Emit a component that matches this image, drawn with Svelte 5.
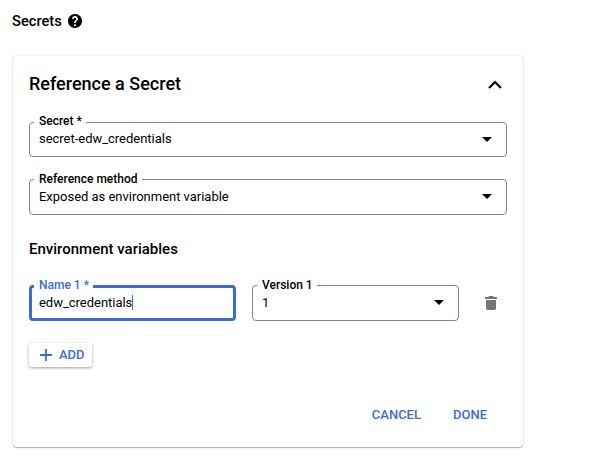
<script>
  let secret = $state('secret-edw_credentials');
  let method = $state('Exposed as environment variable');
  let name = $state('edw_credentials');
  let version = $state('1');
</script>

{#snippet arrow()}
  <svg class="arrow" width="10" height="5" viewBox="0 0 10 5"><path d="M0 0h10L5 5z" fill="#000" /></svg>
{/snippet}

<main>
  <header>
    <span class="title">Secrets</span>
    <svg width="14" height="14" viewBox="2 2 20 20"><path d="M12 2C6.48 2 2 6.48 2 12s4.48 10 10 10 10-4.48 10-10S17.52 2 12 2zm1.2 17h-2.4v-2.4h2.4V19zm1.9-7.6-.9.92C13.5 13.05 13.2 13.6 13.2 15h-2.4v-.5c0-1.1.45-2.1 1.17-2.83l1.24-1.26c.37-.36.59-.86.59-1.41 0-1.1-.8-1.8-1.8-1.8s-1.8.8-1.8 1.8H7.8c0-2.3 1.9-4.1 4.2-4.1s4.2 1.8 4.2 4.1c0 .9-.4 1.7-1.1 2.4z" fill="#000" /></svg>
  </header>

  <section class="card">
    <div class="head">
      <h2>Reference a Secret</h2>
      <svg width="14" height="9" viewBox="0 0 14 9"><path d="M1 8l6-6 6 6" fill="none" stroke="#000" stroke-width="2.1" /></svg>
    </div>

    <div class="field first">
      <span class="label">Secret *</span>
      <span class="value">{secret}</span>
      {@render arrow()}
    </div>
    <div class="field second">
      <span class="label">Reference method</span>
      <span class="value">{method}</span>
      {@render arrow()}
    </div>

    <h3>Environment variables</h3>

    <div class="row">
      <div class="field focused">
        <span class="label">Name 1 *</span>
        <span class="value">{name}</span><i class="caret"></i>
      </div>
      <div class="field">
        <span class="label">Version 1</span>
        <span class="value">{version}</span>
        {@render arrow()}
      </div>
      <svg class="trash" width="12" height="14" viewBox="0 0 12 14"><path d="M0 1h3.3l.7-1h4l.7 1H12v2H0zM1 4h10v8.2q0 1.8-1.8 1.8H2.8Q1 14 1 12.2z" fill="#757575" /></svg>
    </div>

    <button class="add">
      <svg width="12" height="12" viewBox="0 0 12 12"><path d="M6 0v12M0 6h12" stroke="#3b6cd4" stroke-width="1.8" /></svg>
      <span>ADD</span>
    </button>

    <div class="actions">
      <button>CANCEL</button>
      <button>DONE</button>
    </div>
  </section>
</main>

<style>
  :global(body) {
    background: #fff;
  }
  main {
    box-sizing: border-box;
    width: 606px;
    height: 456px;
    padding: 11px 0 0 12px;
    overflow: hidden;
    font-family: Roboto, "Liberation Sans", sans-serif;
    color: #000;
  }
  header {
    display: flex;
    align-items: center;
    gap: 5px;
    height: 20px;
  }
  .title {
    width: 51px;
    font-size: 14.7px;
    font-weight: 500;
  }
  .card {
    box-sizing: border-box;
    width: 510px;
    height: 391px;
    margin: 25px 0 0 1px;
    padding: 0 16px;
    border-radius: 4px;
    box-shadow: 0 1px 1px rgba(0, 0, 0, 0.28), 0 0 2px rgba(0, 0, 0, 0.22);
    display: flex;
    flex-direction: column;
  }
  .head {
    display: flex;
    align-items: center;
    justify-content: space-between;
    height: 56px;
    padding-right: 5px;
  }
  h2,
  h3 {
    margin: 0;
    font-weight: 500;
  }
  h2 {
    padding-bottom: 2px;
    font-size: 18px;
  }
  h3 {
    margin-top: 24px;
    font-size: 15px;
    line-height: 20px;
  }
  .field {
    position: relative;
    box-sizing: border-box;
    display: flex;
    align-items: center;
    height: 36px;
    padding: 0 14px 1px 9px;
    border: 1px solid #80868b;
    border-radius: 4px;
  }
  .first {
    height: 35px;
    margin-top: 10px;
  }
  .second {
    margin-top: 22px;
  }
  .label {
    position: absolute;
    top: -8px;
    left: 4px;
    padding: 0 4px 0 5px;
    background: #fff;
    font-size: 12px;
    line-height: 14px;
    font-weight: 500;
    white-space: nowrap;
  }
  .first .label {
    top: -9px;
  }
  .value {
    font-size: 13px;
    line-height: 18px;
    letter-spacing: -0.02px;
    white-space: nowrap;
  }
  .arrow {
    margin-left: auto;
  }
  .row {
    display: flex;
    align-items: center;
    margin-top: 26px;
  }
  .row .field {
    width: 207px;
    margin-right: 16px;
  }
  .row .focused {
    padding-left: 7px;
    border: 3px solid #3b6cd4;
  }
  .focused .label {
    top: -10px;
    left: 2px;
    color: #3b6cd4;
  }
  .caret {
    width: 1px;
    height: 15px;
    margin-left: -0.5px;
    background: #3b6cd4;
  }
  .trash {
    margin-left: 10px;
  }
  button {
    border: 0;
    padding: 0;
    background: none;
    font: 500 13px/20px Roboto, "Liberation Sans", sans-serif;
    color: #3b6cd4;
  }
  .add {
    display: flex;
    align-items: center;
    gap: 7px;
    width: 63px;
    height: 24px;
    margin-top: 22px;
    padding-left: 11px;
    border-radius: 3px;
    box-shadow: 0 1px 3px rgba(0, 0, 0, 0.38);
  }
  .actions {
    display: flex;
    justify-content: flex-end;
    gap: 32px;
    margin-top: 38px;
    padding-right: 20px;
  }
</style>
